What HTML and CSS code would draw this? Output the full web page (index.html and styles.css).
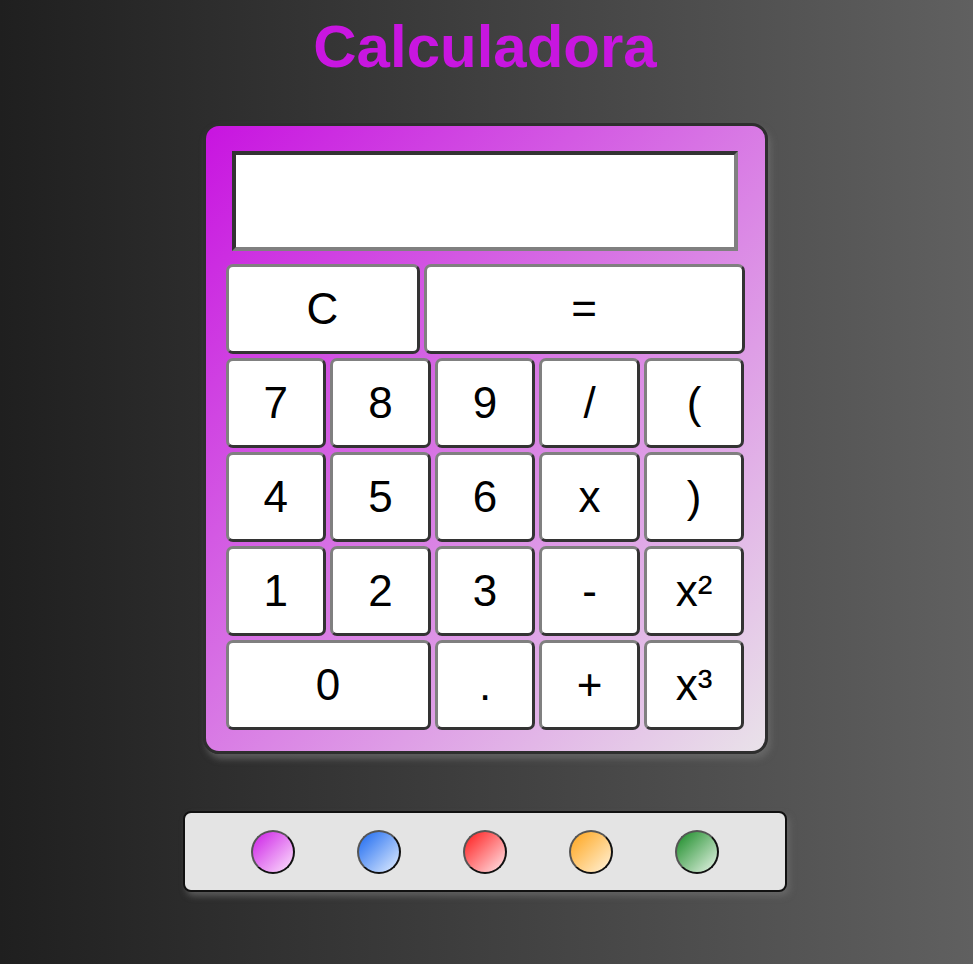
FILE: index.html
```html
<!DOCTYPE html>
<html lang="es">
<head>
<meta charset="utf-8">
<title>Calculadora</title>
<link rel="stylesheet" href="styles.css">
</head>
<body>
<h1 class="title">Calculadora</h1>
<div class="calc">
  <div class="display"></div>
  <div class="top-row">
    <button class="key key-clear">C</button>
    <button class="key key-eq">=</button>
  </div>
  <div class="keys">
    <button class="key">7</button>
    <button class="key">8</button>
    <button class="key">9</button>
    <button class="key">/</button>
    <button class="key">(</button>
    <button class="key">4</button>
    <button class="key">5</button>
    <button class="key">6</button>
    <button class="key">x</button>
    <button class="key">)</button>
    <button class="key">1</button>
    <button class="key">2</button>
    <button class="key">3</button>
    <button class="key">-</button>
    <button class="key">x²</button>
    <button class="key key-wide">0</button>
    <button class="key">.</button>
    <button class="key">+</button>
    <button class="key">x³</button>
  </div>
</div>
<div class="palette">
  <span class="dot dot-purple"></span>
  <span class="dot dot-blue"></span>
  <span class="dot dot-red"></span>
  <span class="dot dot-orange"></span>
  <span class="dot dot-green"></span>
</div>
</body>
</html>
```
FILE: styles.css
```css
html, body {
  margin: 0;
  padding: 0;
}
body {
  min-height: 964px;
  padding-right: 3px;
  box-sizing: border-box;
  background: linear-gradient(to right, #1f1f1f, #606060);
  font-family: "Liberation Sans", Arial, sans-serif;
  display: flex;
  flex-direction: column;
  align-items: center;
}
.title {
  margin: 12px 0 0;
  font-size: 60px;
  line-height: 70px;
  font-weight: bold;
  color: #c816e0;
  text-align: center;
}
.calc {
  margin-top: 41px;
  box-sizing: border-box;
  width: 565px;
  height: 631px;
  border: 3px solid #2e2e2e;
  border-radius: 16px;
  background: linear-gradient(to bottom right, #c814e0, #e9e2e9);
  box-shadow: 3px 5px 6px rgba(110, 110, 110, 0.7);
  padding: 25px 20px 0;
  display: flex;
  flex-direction: column;
}
.display {
  box-sizing: border-box;
  width: 506px;
  height: 100px;
  margin-left: 6px;
  background: #fff;
  border: 4px solid;
  border-color: #333 #808080 #808080 #333;
}
.top-row {
  margin-top: 13px;
  display: flex;
  gap: 4px;
  height: 90px;
}
.keys {
  margin-top: 4px;
  display: grid;
  grid-template-columns: repeat(5, 1fr);
  grid-auto-rows: 90px;
  gap: 4px;
}
.key {
  box-sizing: border-box;
  margin: 0;
  padding: 0;
  background: #fff;
  border: 3px solid;
  border-color: #808080 #333 #333 #808080;
  border-radius: 7px;
  font-family: "Liberation Sans", Arial, sans-serif;
  font-size: 44px;
  color: #000;
  display: flex;
  align-items: center;
  justify-content: center;
}
.key-clear {
  width: 194px;
}
.key-eq {
  flex: 1;
}
.key-wide {
  grid-column: span 2;
}
.palette {
  margin-top: 57px;
  box-sizing: border-box;
  width: 604px;
  height: 81px;
  background: #e4e4e4;
  border: 2px solid #111;
  border-radius: 8px;
  box-shadow: 3px 4px 6px rgba(110, 110, 110, 0.7);
  display: flex;
  align-items: center;
  justify-content: center;
  gap: 62px;
}
.dot {
  box-sizing: border-box;
  width: 44px;
  height: 44px;
  border-radius: 50%;
  border: 2px solid;
  border-color: #555 #111 #111 #555;
}
.dot-purple { background: linear-gradient(to bottom right, #cc1ee6, #fde2fd); }
.dot-blue { background: linear-gradient(to bottom right, #1a68f0, #e2eeff); }
.dot-red { background: linear-gradient(to bottom right, #ff1a1a, #ffe6ea); }
.dot-orange { background: linear-gradient(to bottom right, #ffa41a, #fff3da); }
.dot-green { background: linear-gradient(to bottom right, #178a24, #e8f5e8); }
```
